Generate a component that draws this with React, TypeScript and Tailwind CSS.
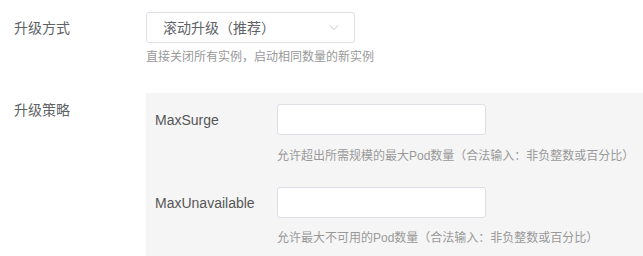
export default function App() {
  return (
    <div
      className="w-[643px] h-[256px] overflow-hidden bg-white pt-3"
      style={{ fontFamily: '"Liberation Sans", "Noto Sans CJK SC", sans-serif' }}
    >
      {/* 升级方式 */}
      <div className="flex">
        <div className="w-[146px] pl-[14px] h-[31px] flex items-center text-sm text-[#606266]">升级方式</div>
        <div>
          <div className="w-[209px] h-[31px] border border-[#dcdfe6] rounded-[3px] flex items-center justify-between pl-4 pr-[15px] bg-white">
            <span className="text-sm text-[#606266]">滚动升级（推荐）</span>
            <svg width="10" height="6" viewBox="0 0 10 6" fill="none" stroke="#c0c4cc" strokeWidth="1">
              <path d="M1 0.5L5 4.5L9 0.5" />
            </svg>
          </div>
          <div className="mt-[6px] text-xs leading-4 text-[#999]">直接关闭所有实例，启动相同数量的新实例</div>
        </div>
      </div>

      {/* 升级策略 */}
      <div className="flex mt-[28px]">
        <div className="w-[146px] pl-[14px] pt-[7px] text-sm leading-5 text-[#606266]">升级策略</div>
        <div className="flex-1 bg-[#f5f5f5] pt-[11px] pl-[9px] pb-6">
          <div className="flex">
            <div className="w-[122px] h-[31px] flex items-center text-sm text-[#555]">MaxSurge</div>
            <div>
              <div className="w-[209px] h-[31px] border border-[#dcdfe6] rounded-[3px] bg-white" />
              <div className="mt-[13px] text-xs leading-4 text-[#999]">允许超出所需规模的最大Pod数量（合法输入：非负整数或百分比）</div>
            </div>
          </div>
          <div className="flex mt-[23px]">
            <div className="w-[122px] h-[31px] flex items-center text-sm text-[#555]">MaxUnavailable</div>
            <div>
              <div className="w-[209px] h-[31px] border border-[#dcdfe6] rounded-[3px] bg-white" />
              <div className="mt-[12px] text-xs leading-4 text-[#999]">允许最大不可用的Pod数量（合法输入：非负整数或百分比）</div>
            </div>
          </div>
        </div>
      </div>
    </div>
  );
}
